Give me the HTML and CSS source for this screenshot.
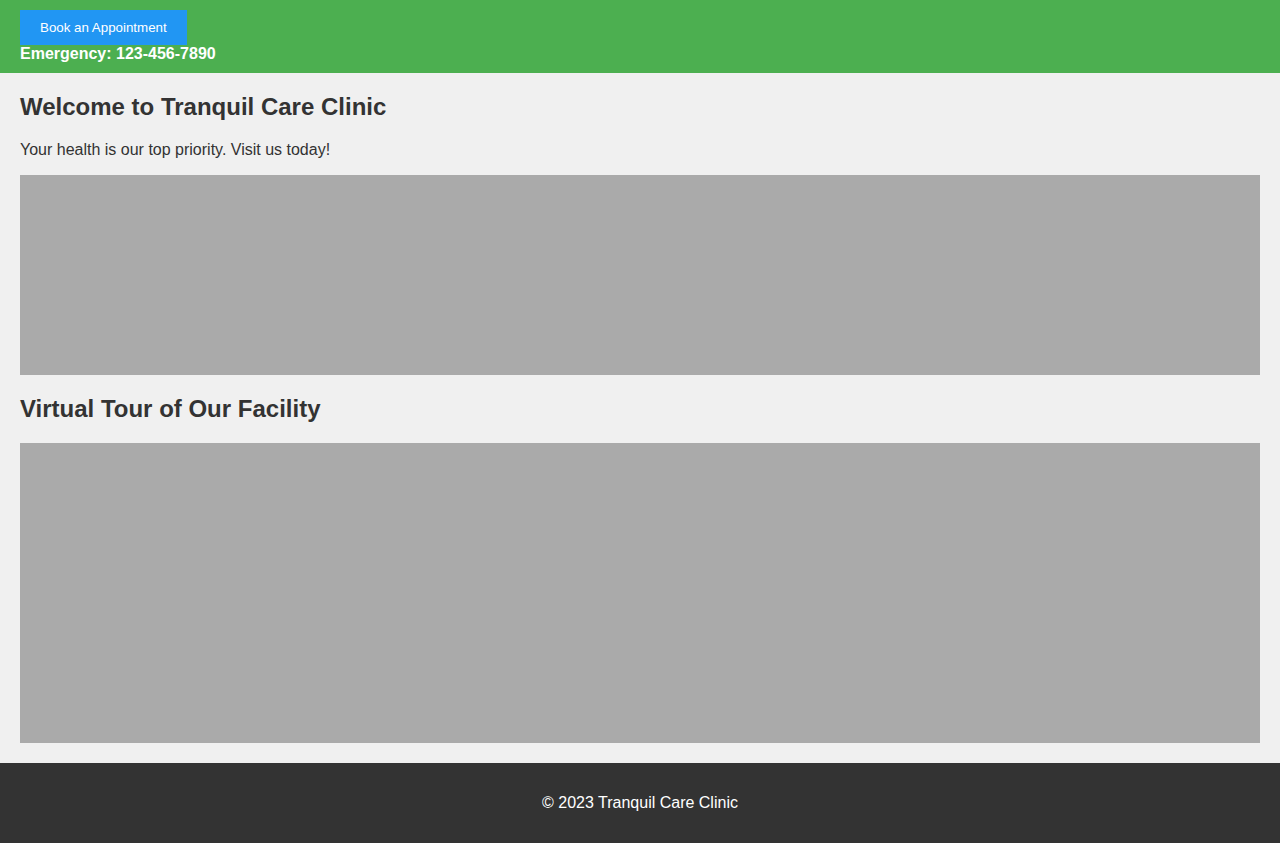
FILE: index.html
```html
<!DOCTYPE html>
<html lang="en">
<head>
<meta charset="utf-8">
<title>Tranquil Care Clinic</title>
<link rel="stylesheet" href="styles.css">
</head>
<body>
<header class="top">
  <button class="book-btn">Book an Appointment</button>
  <div class="emergency">Emergency: 123-456-7890</div>
</header>
<main class="content">
  <h1 class="title">Welcome to Tranquil Care Clinic</h1>
  <p class="intro">Your health is our top priority. Visit us today!</p>
  <div class="placeholder short"></div>
  <h2 class="title section">Virtual Tour of Our Facility</h2>
  <div class="placeholder tall"></div>
</main>
<footer class="foot">© 2023 Tranquil Care Clinic</footer>
</body>
</html>
```
FILE: styles.css
```css
* { box-sizing: border-box; }
body {
  margin: 0;
  font-family: "Liberation Sans", Arial, sans-serif;
  background: #f0f0f0;
  color: #333;
}
.top {
  background: #4caf50;
  padding: 10px 20px;
  display: flex;
  flex-direction: column;
  align-items: flex-start;
}
.book-btn {
  background: #2196f3;
  color: #fff;
  border: none;
  padding: 10px 20px;
  font-family: "Liberation Sans", Arial, sans-serif;
  font-size: 13.333px;
  line-height: normal;
}
.emergency {
  color: #fff;
  font-weight: bold;
  font-size: 16px;
  line-height: 18px;
}
.content {
  padding: 20px;
}
.title {
  margin: 0 0 20px;
  font-size: 24px;
  font-weight: bold;
  line-height: 27.6px;
}
.section { margin-top: 20px; }
.intro {
  margin: 0 0 16px;
  font-size: 16px;
  line-height: 18.4px;
}
.placeholder { background: #aaa; }
.short { height: 200px; }
.tall { height: 300px; }
.foot {
  background: #333;
  color: #fff;
  text-align: center;
  font-size: 16px;
  line-height: 18px;
  padding: 31px 20px;
}
```
